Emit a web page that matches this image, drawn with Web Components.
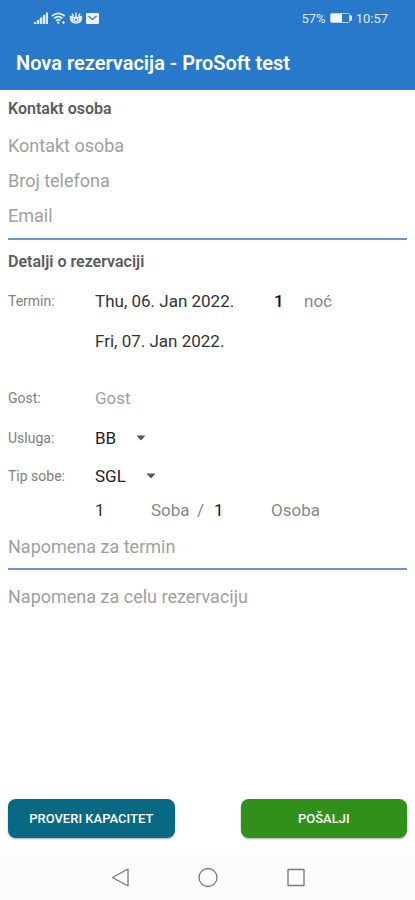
<!DOCTYPE html>
<html lang="sr-Latn">
<head>
<meta charset="utf-8">
<meta name="viewport" content="width=device-width, initial-scale=1">
<title>Nova rezervacija - ProSoft test</title>
<style>
  body { margin: 0; background: #fff; font-family: Roboto, "Liberation Sans", sans-serif; }
</style>
</head>
<body>
<reservation-page></reservation-page>

<script>
const define = (name, template, setup) => customElements.define(name, class extends HTMLElement {
  connectedCallback() {
    if (this.shadowRoot) return;
    const root = this.attachShadow({ mode: "open" });
    root.innerHTML = template;
    if (setup) setup(root, this);
  }
});

const fieldStyles = `
  * { box-sizing: border-box; }
  input, select, button {
    font: inherit; font-size: 17px; color: #333; background: none;
    border: 0; border-radius: 0; margin: 0; padding: 0; outline-offset: 2px;
  }
  input::placeholder { color: #a0a0a0; opacity: 1; }
  .name { font-size: 14px; color: #808080; }
  .unit { font-size: 17px; color: #888; }
  .row { display: grid; grid-template-columns: 87px 1fr; align-items: center; }
`;

define("status-bar", `
  <style>
    :host { display: flex; justify-content: space-between; align-items: center; height: 36px; padding: 0 27px 0 34px; color: #dfeafa; font-size: 13px; }
    div { display: flex; align-items: center; gap: 4px; }
    svg { display: block; }
    .icons { gap: 3px; }
  </style>
  <div class="icons">
    <svg width="14" height="12" viewBox="0 0 14 12" fill="currentColor" aria-hidden="true"><path d="M0 10h2v2H0zM3 8h2v4H3zM6 5.500h2V12H6zM9 3h2v9H9zM12 .5h2V12h-2z"/><path d="M0 11L14 0v12H0z" opacity=".35"/></svg>
    <svg width="15" height="12" viewBox="0 0 15 12" fill="none" stroke="currentColor" stroke-width="1.700" aria-hidden="true"><path d="M.8 4.200Q7.200-1.600 13.800 4.200M3 6.500Q7.200 2.600 11.500 6.500M5 8.600q2.200-1.800 4.500 0"/><circle cx="7.200" cy="10.600" r="1.200" fill="currentColor" stroke="none"/><path d="M11 10.500h3M12.500 9v3" stroke-width="1.200"/></svg>
    <svg width="14" height="12" viewBox="0 0 14 12" fill="none" stroke="currentColor" stroke-width="1.500" aria-hidden="true"><path d="M.8 4.200Q7 7 13.200 4.200M1.500 5.500Q1.500 11 7 11t5.500-5.500M7 .5v4.300M3.200 1.500l1.200 3M10.800 1.500l-1.200 3M3 5.500Q3 8 4.500 9.500M11 5.500Q11 8 9.500 9.500"/><circle cx="7" cy="7.700" r="1.800"/></svg>
    <svg width="13" height="11" viewBox="0 0 13 11" aria-hidden="true"><rect width="13" height="11" rx="1" fill="#f0f5fc"/><path d="M2.500 3l4 3.500 4-3.500" fill="none" stroke="#2979cb" stroke-width="1.300"/></svg>
  </div>
  <div>
    <span>57%</span>
    <svg width="22" height="10" viewBox="0 0 22 10" aria-hidden="true"><rect x=".5" y=".5" width="19" height="9" rx="1" fill="none" stroke="#b5d0ef"/><path d="M1 1h11v8H1z" fill="#f5f9ff"/><path d="M20 2.500h2v5h-2z" fill="currentColor"/></svg>
    <span>10:57</span>
  </div>`);

define("app-bar", `
  <style>
    :host { display: block; background: #2979cb; color: #fff; }
    h1 { margin: 0; padding: 15px 16px; font-size: 20px; line-height: 24px; font-weight: 600; }
  </style>
  <status-bar></status-bar>
  <h1><slot></slot></h1>`);

define("section-title", `
  <style>
    :host { display: block; }
    h2 { margin: 0; font-size: 16px; line-height: 38px; font-weight: 600; color: #5c5c5c; }
  </style>
  <h2><slot></slot></h2>`);

define("text-field", `
  <style>${fieldStyles}
    :host { display: block; }
    input { display: block; width: 100%; height: var(--field-height, 35px); font-size: 18px; }
  </style>
  <input>`, (root, host) => {
    const input = root.querySelector("input");
    input.type = host.getAttribute("type") || "text";
    input.placeholder = host.getAttribute("label");
    input.setAttribute("aria-label", host.getAttribute("label"));
  });

define("section-line", `
  <style>:host { display: block; height: 2px; background: #6f93cc; }</style>`);

define("stay-dates", `
  <style>${fieldStyles}
    :host { display: block; }
    .row { grid-template-columns: 87px 179px 30px 1fr; grid-auto-rows: 40px; }
    button { justify-self: start; }
    .until { grid-column: 2; }
    input { width: 24px; font-weight: 500; color: #111; }
  </style>
  <div class="row">
    <span class="name" id="term">Termin:</span>
    <button type="button" aria-describedby="term">Thu, 06. Jan 2022.</button>
    <input id="nights" inputmode="numeric" value="1">
    <label class="unit" for="nights">noć</label>
    <button type="button" class="until" aria-describedby="term">Fri, 07. Jan 2022.</button>
  </div>`);

define("guest-field", `
  <style>${fieldStyles}
    :host { display: block; }
    .row { height: 42px; }
    input { width: 100%; }
  </style>
  <div class="row">
    <label class="name" for="guest">Gost:</label>
    <input id="guest" placeholder="Gost">
  </div>`);

define("choice-field", `
  <style>${fieldStyles}
    :host { display: block; }
    .row { height: 38px; }
    .pick { display: grid; justify-self: start; align-items: center; }
    select, svg { grid-area: 1 / 1; }
    select { appearance: none; field-sizing: content; padding-right: 30px; color: #222; }
    svg { justify-self: end; pointer-events: none; }
  </style>
  <div class="row">
    <label class="name" for="choice"></label>
    <span class="pick">
      <select id="choice"><option></option></select>
      <svg width="10" height="6" viewBox="0 0 10 6" fill="#555" aria-hidden="true"><path d="M.5.5h9L5 5.500z"/></svg>
    </span>
  </div>`, (root, host) => {
    root.querySelector("label").textContent = host.getAttribute("label");
    root.querySelector("option").textContent = host.getAttribute("value");
  });

define("room-counts", `
  <style>${fieldStyles}
    :host { display: block; padding-left: 87px; }
    .counts { display: grid; grid-template-columns: 56px 46px 17px 57px 1fr; align-items: center; height: 30px; }
    input { width: 40px; }
    #people { color: #111; }
  </style>
  <div class="counts">
    <input id="rooms" inputmode="numeric" value="1">
    <label class="unit" for="rooms">Soba</label>
    <span class="unit">/</span>
    <input id="people" inputmode="numeric" value="1">
    <label class="unit" for="people">Osoba</label>
  </div>`);

define("action-button", `
  <style>
    :host { display: block; }
    button {
      display: block; width: 100%; height: 39px; padding: 0; border: 0; border-radius: 8px;
      background: var(--fill); color: #fff; font: 500 13px/20px Roboto, "Liberation Sans", sans-serif;
      box-shadow: 0 1px 2px rgba(0, 0, 0, .35);
    }
  </style>
  <button type="button"><slot></slot></button>`);

define("system-nav", `
  <style>
    :host { display: block; background: #fbfbfb; }
    nav { display: grid; grid-template-columns: repeat(3, 20px); gap: 68px; justify-content: center; align-items: center; height: 45px; }
    button { display: block; border: 0; padding: 0; background: none; }
    svg { display: block; fill: none; stroke: #777; stroke-width: 1.300; stroke-linejoin: round; }
  </style>
  <nav aria-label="Sistem">
    <button type="button" aria-label="Nazad"><svg width="20" height="20" viewBox="0 0 20 20"><path d="M18 1v17L2.500 9.500z"/></svg></button>
    <button type="button" aria-label="Početak"><svg width="20" height="20" viewBox="0 0 20 20"><circle cx="10" cy="9.500" r="9"/></svg></button>
    <button type="button" aria-label="Pregled"><svg width="20" height="20" viewBox="0 0 20 20"><path d="M2 1.500h16v16H2z"/></svg></button>
  </nav>`);

define("reservation-page", `
  <style>
    :host { display: flex; flex-direction: column; min-height: 100vh; }
    main { flex: 1; display: flex; flex-direction: column; padding: 0 8px 17px; }
    .contact-line { margin: 5px 0 3px; }
    .note-line { margin: 1px 0 5px; }
    .note { --field-height: 42px; }
    guest-field { margin-top: 16px; }
    .actions { display: grid; grid-template-columns: 1fr 1fr; gap: 66px; margin-top: auto; }
    .check { --fill: #076984; }
    .send { --fill: #319019; }
  </style>
  <app-bar>Nova rezervacija - ProSoft test</app-bar>
  <main>
    <section-title>Kontakt osoba</section-title>
    <text-field label="Kontakt osoba"></text-field>
    <text-field label="Broj telefona" type="tel"></text-field>
    <text-field label="Email" type="email"></text-field>
    <section-line class="contact-line"></section-line>
    <section-title>Detalji o rezervaciji</section-title>
    <stay-dates></stay-dates>
    <guest-field></guest-field>
    <choice-field label="Usluga:" value="BB"></choice-field>
    <choice-field label="Tip sobe:" value="SGL"></choice-field>
    <room-counts></room-counts>
    <text-field class="note" label="Napomena za termin"></text-field>
    <section-line class="note-line"></section-line>
    <text-field class="note" label="Napomena za celu rezervaciju"></text-field>
    <div class="actions">
      <action-button class="check">PROVERI KAPACITET</action-button>
      <action-button class="send">POŠALJI</action-button>
    </div>
  </main>
  <system-nav></system-nav>`);
</script>
</body>
</html>
